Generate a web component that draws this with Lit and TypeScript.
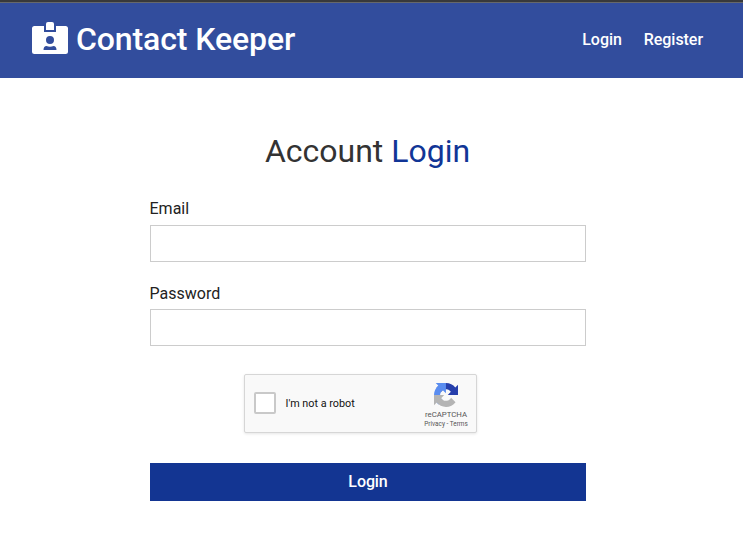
import { LitElement, html, css } from "lit";
import { customElement } from "lit/decorators.js";

@customElement("captcha-box")
class CaptchaBox extends LitElement {
  static styles = css`
    :host { display: flex; box-sizing: border-box; width: 233px; height: 59px; border: 1px solid #d6d6d6; border-radius: 2px; background: #f9f9f9; box-shadow: 0 1px 3px rgba(0,0,0,.1); align-items: center; padding-left: 9px; font-family: Roboto, sans-serif; }
    .check { box-sizing: border-box; width: 22px; height: 22px; border: 2px solid #c9c9c9; border-radius: 2px; background: #fff; margin-top: -2px; }
    .label { margin-left: 9.5px; font-size: 10.8px; color: #111; flex: 1; white-space: nowrap; }
    .brand { width: 60px; height: 57px; display: flex; flex-direction: column; align-items: center; color: #555; }
    .logo { width: 24px; height: 24px; margin-top: 8px; flex: none; }
    .name { font-size: 7.8px; line-height: 9px; margin-top: 3px; white-space: nowrap; }
    .links { font-size: 6.4px; line-height: 8px; margin-top: 1px; white-space: nowrap; }
  `;
  render() {
    return html`
      <div class="check"></div>
      <div class="label">I'm not a robot</div>
      <div class="brand">
        <svg class="logo" viewBox="0 0 64 64">
          <path fill="#263fac" d="M64 31.955a34 34 0 0 0-.029-1.37V4.687l-7.16 7.16C50.951 4.674 42.033.093 32.045.093c-10.394 0-19.628 4.96-25.458 12.642l11.736 11.86a15.55 15.55 0 0 1 4.754-5.334c2.05-1.6 4.952-2.906 8.968-2.906.485 0 .86.057 1.135.163 4.976.393 9.288 3.139 11.828 7.124l-8.307 8.307L64 31.955"/>
          <path fill="#5a8df0" d="M31.862.094a34 34 0 0 0-1.37.028H4.594l7.16 7.16C4.58 13.142 0 22.06 0 32.05c0 10.394 4.96 19.628 12.642 25.458l11.86-11.736a15.55 15.55 0 0 1-5.334-4.754c-1.6-2.05-2.906-4.952-2.906-8.968 0-.485.057-.86.163-1.135.393-4.976 3.139-9.288 7.124-11.828l8.307 8.307L31.862.094"/>
          <path fill="#b4b4b4" d="M.001 32.045c0 .458.01.915.03 1.37v25.898l7.16-7.16c5.86 7.173 14.778 11.754 24.766 11.754 10.394 0 19.628-4.96 25.458-12.642L45.679 39.405a15.55 15.55 0 0 1-4.754 5.334c-2.05 1.6-4.952 2.906-8.968 2.906-.485 0-.86-.057-1.135-.163-4.976-.393-9.288-3.139-11.828-7.124l8.307-8.307L.001 32.045"/>
        </svg>
        <div class="name">reCAPTCHA</div>
        <div class="links">Privacy - Terms</div>
      </div>`;
  }
}

@customElement("app-root")
class AppRoot extends LitElement {
  static styles = css`
    :host { display: block; height: 549px; overflow: hidden; background: #fff; color: #333; font-family: Roboto, sans-serif; font-size: 16px; }
    .edge { height: 2px; background: #38393b; border-bottom: 1px solid #66686b; }
    header { height: 75px; box-sizing: border-box; background: #324d9d; color: #fff; display: flex; align-items: center; justify-content: space-between; padding: 0 40px 3px 32px; font-weight: 500; }
    .brand { display: flex; align-items: center; }
    .badge { width: 36px; height: 32px; margin: 0 8px 2px 0; }
    .brand h1 { margin: 0; font-size: 32px; line-height: 40px; font-weight: 500; letter-spacing: -0.1px; }
    nav { display: flex; gap: 22px; letter-spacing: -0.05px; }
    main { width: 436px; margin-left: 150px; padding-top: 54px; }
    h2 { margin: 0 0 0 -1px; font-weight: 400; font-size: 32px; line-height: 38px; text-align: center; }
    h2 span { color: #113596; }
    label { display: block; line-height: 20px; margin-left: -0.5px; color: #222; }
    .email { margin-top: 29px; }
    .password { margin-top: 22px; }
    input { display: block; box-sizing: border-box; width: 436px; height: 37px; margin: 6px 0 0; border: 1px solid #ccc; border-radius: 0; background: #fff; }
    .password + input { margin-top: 5px; }
    captcha-box { margin: 28px 0 0 94px; }
    button { display: block; width: 436px; height: 38px; margin: 30px 0 0; padding: 0 0 2px; border: 0; background: #133592; color: #fff; font: 500 16px Roboto, sans-serif; letter-spacing: -0.1px; }
  `;
  render() {
    return html`
      <div class="edge"></div>
      <header>
        <div class="brand">
          <svg class="badge" viewBox="0 0 36 32" fill="#fff">
            <path fill-rule="evenodd" d="M2.500 4H12V10H24V4H33.500a2.500 2.500 0 0 1 2.500 2.500V29.500a2.500 2.500 0 0 1-2.500 2.500H2.500a2.500 2.500 0 0 1-2.500-2.500V6.500a2.500 2.500 0 0 1 2.500-2.500ZM18 14a4 4 0 1 0 0 8a4 4 0 1 0 0-8ZM14.500 24c-1.800 0-3 1.500-3 4H24.500c0-2.500-1.200-4-3-4c-2 1-5 1-7 0Z"/>
            <path d="M14 8V2a2 2 0 0 1 2-2h4a2 2 0 0 1 2 2v6Z"/>
          </svg>
          <h1>Contact Keeper</h1>
        </div>
        <nav><span>Login</span><span>Register</span></nav>
      </header>
      <main>
        <h2>Account <span>Login</span></h2>
        <label class="email" for="email">Email</label>
        <input id="email" type="email">
        <label class="password" for="password">Password</label>
        <input id="password" type="password">
        <captcha-box></captcha-box>
        <button>Login</button>
      </main>`;
  }
}
